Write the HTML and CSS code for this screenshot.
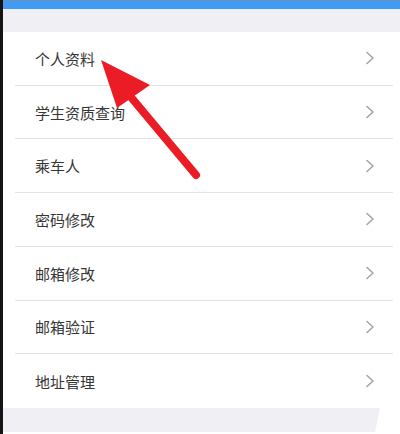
FILE: index.html
```html
<!DOCTYPE html>
<html lang="zh-CN">
<head>
<meta charset="utf-8">
<title>账户设置</title>
<link rel="stylesheet" href="styles.css">
</head>
<body>
<div class="page">
  <div class="edge"></div>
  <div class="main">
    <div class="topbar"></div>
    <div class="spacer"></div>
    <ul class="list">
      <li class="row"><span class="label">个人资料</span><svg class="chev" viewBox="0 0 10 14" width="10" height="14"><path d="M2 1.5 L8 7 L2 12.5" /></svg></li>
      <li class="row"><span class="label">学生资质查询</span><svg class="chev" viewBox="0 0 10 14" width="10" height="14"><path d="M2 1.5 L8 7 L2 12.5" /></svg></li>
      <li class="row"><span class="label">乘车人</span><svg class="chev" viewBox="0 0 10 14" width="10" height="14"><path d="M2 1.5 L8 7 L2 12.5" /></svg></li>
      <li class="row"><span class="label">密码修改</span><svg class="chev" viewBox="0 0 10 14" width="10" height="14"><path d="M2 1.5 L8 7 L2 12.5" /></svg></li>
      <li class="row"><span class="label">邮箱修改</span><svg class="chev" viewBox="0 0 10 14" width="10" height="14"><path d="M2 1.5 L8 7 L2 12.5" /></svg></li>
      <li class="row"><span class="label">邮箱验证</span><svg class="chev" viewBox="0 0 10 14" width="10" height="14"><path d="M2 1.5 L8 7 L2 12.5" /></svg></li>
      <li class="row"><span class="label">地址管理</span><svg class="chev" viewBox="0 0 10 14" width="10" height="14"><path d="M2 1.5 L8 7 L2 12.5" /></svg></li>
    </ul>
    <div class="footer"></div>
  </div>
  <svg class="arrow" viewBox="0 0 400 434" width="400" height="434">
    <line x1="130" y1="96" x2="196" y2="175" />
    <polygon points="101,60 150,85 117,108" />
  </svg>
</div>
</body>
</html>
```

FILE: styles.css
```css
html, body {
  margin: 0;
  padding: 0;
  background: #ffffff;
}

.page {
  position: relative;
  display: flex;
  width: 400px;
  height: 434px;
  overflow: hidden;
  font-family: "Noto Sans CJK SC", "Noto Sans", sans-serif;
}

.edge {
  width: 3px;
  background: #141414;
  flex: none;
}

.main {
  flex: 1;
  display: flex;
  flex-direction: column;
  background: #ffffff;
}

.topbar {
  height: 9px;
  background: #3f9bf6;
  border-top: 1px solid #6f8fb0;
  box-sizing: border-box;
}

.spacer {
  height: 23px;
  background: #efeff4;
}

.list {
  list-style: none;
  margin: 0;
  padding: 0;
}

.row {
  display: flex;
  align-items: center;
  justify-content: space-between;
  box-sizing: border-box;
  height: calc(376px / 7);
  margin: 0 7px 0 12px;
  padding: 0 18px 0 20px;
  border-bottom: 1px solid #e3e3e6;
}

.row:last-child {
  border-bottom: none;
}

.label {
  font-size: 15px;
  color: #363636;
  line-height: 1;
}

.chev {
  display: block;
}

.chev path {
  fill: none;
  stroke: #a2a2a2;
  stroke-width: 1.5;
  stroke-linecap: round;
  stroke-linejoin: round;
}

.footer {
  height: 24px;
  background: #efeff4;
  clip-path: polygon(0 0, 377px 0, 372px 100%, 0 100%);
}

.arrow {
  position: absolute;
  left: 0;
  top: 0;
  pointer-events: none;
}

.arrow line {
  stroke: #ec1c26;
  stroke-width: 8;
  stroke-linecap: round;
}

.arrow polygon {
  fill: #ec1c26;
}
```
